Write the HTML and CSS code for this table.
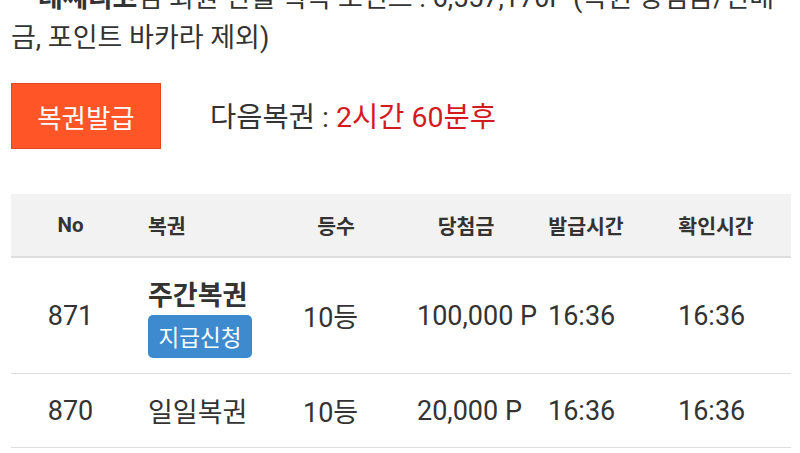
FILE: index.html
```html
<!DOCTYPE html>
<html lang="ko">
<head>
<meta charset="utf-8">
<link rel="stylesheet" href="styles.css">
</head>
<body>
<div class="page">
  <p class="info">
    <span class="line first"><b>레쎄리코</b>님 회원 전월 획득 포인트 : 6,557,170P (복권 당첨금/전배</span>
    <span class="line">금, 포인트 바카라 제외)</span>
  </p>
  <div class="issue">
    <button class="issue-btn">복권발급</button>
    <div class="next">다음복권 : <span class="red">2시간 60분후</span></div>
  </div>
  <div class="table">
    <div class="row head">
      <div class="c c1">No</div>
      <div class="c c2">복권</div>
      <div class="c c3">등수</div>
      <div class="c c4">당첨금</div>
      <div class="c c5">발급시간</div>
      <div class="c c6">확인시간</div>
    </div>
    <div class="row tall">
      <div class="c c1">871</div>
      <div class="c c2 stack"><strong>주간복권</strong><span class="pay">지급신청</span></div>
      <div class="c c3">10등</div>
      <div class="c c4">100,000 P</div>
      <div class="c c5">16:36</div>
      <div class="c c6">16:36</div>
    </div>
    <div class="row">
      <div class="c c1">870</div>
      <div class="c c2">일일복권</div>
      <div class="c c3">10등</div>
      <div class="c c4">20,000 P</div>
      <div class="c c5">16:36</div>
      <div class="c c6">16:36</div>
    </div>
  </div>
</div>
</body>
</html>
```

FILE: styles.css
```css
* { box-sizing: border-box; }
html, body { margin: 0; padding: 0; background: #fff; }
body {
  font-family: Roboto, "Noto Sans CJK KR", sans-serif;
  color: #333;
  overflow: hidden;
  width: 800px;
  height: 453px;
}
.page { padding: 0 9px 0 11px; }
.info {
  margin: -22px 0 0 0;
  font-size: 27px;
  line-height: 40px;
  white-space: nowrap;
}
.line { display: block; }
.line.first { padding-left: 27px; }
.line.first b { font-weight: 700; }
.issue {
  display: flex;
  align-items: center;
  margin-top: 25px;
  gap: 49px;
}
.issue-btn {
  width: 150px;
  height: 66px;
  background: #ff5527;
  border: 1px solid #e2471d;
  color: #fff;
  font-family: inherit;
  font-size: 26.5px;
  padding: 0;
}
.next { font-size: 28.5px; color: #333; margin-top: -3px; }
.red { color: #d41a1f; }
.table { margin-top: 45px; width: 780px; }
.row {
  display: grid;
  grid-template-columns: 119px 160px 90px 157px 104px 150px;
  height: 74px;
  border-bottom: 1px solid #dedede;
  align-items: center;
  font-size: 27px;
}
.row.head {
  height: 64px;
  background: #f2f2f2;
  border-bottom: 2px solid #dedede;
  font-size: 20.5px;
  font-weight: 700;
}
.row.tall { height: 116px; }
.c { white-space: nowrap; }
.c1 { text-align: center; }
.c2 { padding-left: 18px; }
.c3 { padding-left: 13px; }
.c4 { padding-left: 37px; }
.c5 { padding-left: 11px; }
.c6 { padding-left: 37px; }
.head .c3 { text-align: center; padding-left: 2px; }
.head .c4 { padding-left: 15px; text-align: center; }
.head .c5 { padding-left: 0; padding-right: 6px; text-align: center; }
.head .c6 { padding-left: 0; text-align: center; }
.stack { display: flex; flex-direction: column; align-items: flex-start; gap: 4px; padding-top: 7px; }
.stack strong { font-weight: 700; font-size: 27px; line-height: 30px; }
.pay {
  background: #3d8ace;
  color: #fff;
  font-size: 22.5px;
  border-radius: 5px;
  width: 104px;
  height: 43px;
  display: flex;
  align-items: center;
  justify-content: center;
}
```
